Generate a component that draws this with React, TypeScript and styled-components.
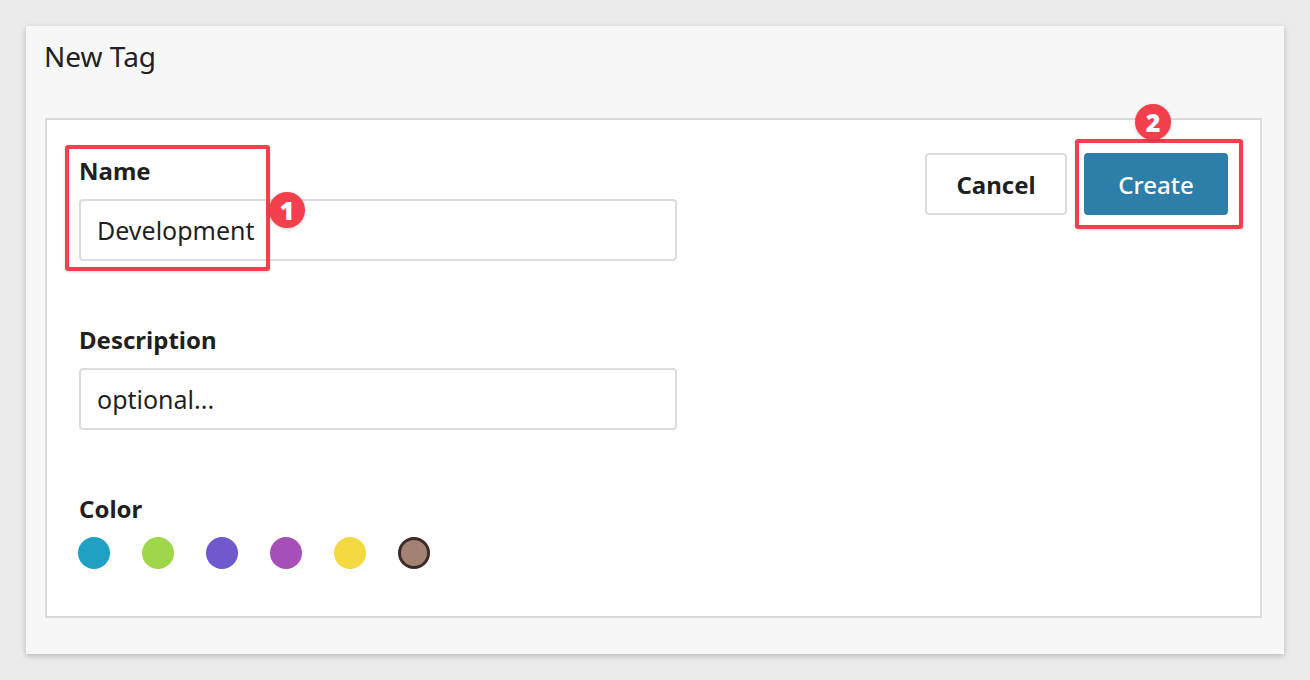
import React from "react";
import styled, { createGlobalStyle } from "styled-components";

const Global = createGlobalStyle`
  html, body { margin: 0; padding: 0; background: #ebebeb; }
  body { font-family: "Noto Sans", "Open Sans", sans-serif; color: #1f1f1f; }
`;

const Page = styled.div`
  width: 1310px;
  height: 680px;
  box-sizing: border-box;
  padding: 26px 26px 0 26px;
`;

const Dialog = styled.div`
  position: relative;
  width: 1258px;
  height: 628px;
  box-sizing: border-box;
  background: #f7f7f7;
  box-shadow: 0 2px 6px rgba(0, 0, 0, 0.22);
  padding: 12px 22px 36px 19px;
  display: flex;
  flex-direction: column;
`;

const Title = styled.div`
  font-size: 28px;
  line-height: 36px;
  font-weight: 400;
  color: #222;
  margin-bottom: 44px;
  margin-left: -1px;
`;

const Panel = styled.div`
  flex: 1;
  background: #fff;
  border: 2px solid #dadada;
  padding: 37px 32px 0 32px;
  display: flex;
  justify-content: space-between;
`;

const Form = styled.div`
  display: flex;
  flex-direction: column;
  width: 598px;
`;

const Field = styled.div`
  display: flex;
  flex-direction: column;
  margin-bottom: 65px;
`;

const Label = styled.div`
  font-size: 24px;
  line-height: 28px;
  font-weight: 700;
  color: #1f1f1f;
  margin-bottom: 14px;
`;

const Input = styled.div`
  height: 62px;
  box-sizing: border-box;
  border: 2px solid #dcdcdc;
  border-radius: 4px;
  padding: 0 16px;
  display: flex;
  align-items: center;
  font-size: 25px;
  color: #1f1f1f;
`;

const Swatches = styled.div`
  display: flex;
  gap: 32px;
  margin-top: 7px;
  margin-left: -1px;
`;

const Swatch = styled.div<{ $color: string; $selected?: boolean }>`
  width: 32px;
  height: 32px;
  border-radius: 50%;
  box-sizing: border-box;
  background: ${(p) => p.$color};
  border: ${(p) => (p.$selected ? "3px solid #3d2b26" : "none")};
`;

const Actions = styled.div`
  display: flex;
  gap: 17px;
  align-items: flex-start;
  margin-top: -4px;
`;

const Button = styled.button<{ $primary?: boolean }>`
  height: 62px;
  box-sizing: border-box;
  padding: 0 10px;
  border-radius: 4px;
  font-family: inherit;
  font-size: 24px;
  font-weight: ${(p) => (p.$primary ? 500 : 700)};
  background: ${(p) => (p.$primary ? "#2d7ea8" : "#fff")};
  color: ${(p) => (p.$primary ? "#fff" : "#1f1f1f")};
  border: 2px solid ${(p) => (p.$primary ? "#2d7ea8" : "#dcdcdc")};
  width: ${(p) => (p.$primary ? "144px" : "142px")};
`;

const Highlight = styled.div`
  position: absolute;
  border: 4px solid #f43f4d;
  border-radius: 3px;
  box-sizing: border-box;
  box-shadow: 0 1px 3px rgba(0, 0, 0, 0.15);
`;

const Badge = styled.div`
  position: absolute;
  width: 36px;
  height: 36px;
  border-radius: 50%;
  background: #f43f4d;
  color: #fff;
  font-family: "Open Sans", sans-serif;
  font-weight: 800;
  font-size: 25px;
  display: flex;
  align-items: center;
  justify-content: center;
  box-shadow: 0 1px 3px rgba(0, 0, 0, 0.2);
`;

const colors = ["#1ea1c2", "#9fd64a", "#6f59cc", "#a64fb7", "#f5d940", "#a28272"];

export default function App() {
  return (
    <>
      <Global />
      <Page>
        <Dialog>
          <Title>New Tag</Title>
          <Panel>
            <Form>
              <Field>
                <Label>Name</Label>
                <Input>Development</Input>
              </Field>
              <Field>
                <Label>Description</Label>
                <Input>optional...</Input>
              </Field>
              <div>
                <Label>Color</Label>
                <Swatches>
                  {colors.map((c, i) => (
                    <Swatch key={c} $color={c} $selected={i === colors.length - 1} />
                  ))}
                </Swatches>
              </div>
            </Form>
            <Actions>
              <Button>Cancel</Button>
              <Button $primary>Create</Button>
            </Actions>
          </Panel>
          <Highlight style={{ left: 39, top: 119, width: 205, height: 126 }} />
          <Badge style={{ left: 243, top: 166 }}>1</Badge>
          <Highlight style={{ left: 1049, top: 113, width: 168, height: 90 }} />
          <Badge style={{ left: 1109, top: 78 }}>2</Badge>
        </Dialog>
      </Page>
    </>
  );
}
